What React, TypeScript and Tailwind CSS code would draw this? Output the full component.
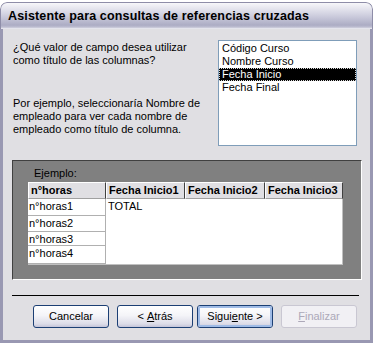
const font = { fontFamily: '"Liberation Sans", Arial, sans-serif' };

const fields = ["Código Curso", "Nombre Curso", "Fecha Inicio", "Fecha Final"];
const cols = [
  { label: "n°horas", w: "w-[78px]" },
  { label: "Fecha Inicio1", w: "w-[79px]" },
  { label: "Fecha Inicio2", w: "w-[80px]" },
  { label: "Fecha Inicio3", w: "w-[78px]" },
];
const rows = [
  { label: "n°horas1", h: "h-[17px]" },
  { label: "n°horas2", h: "h-[17px]" },
  { label: "n°horas3", h: "h-[14px]" },
  { label: "n°horas4", h: "h-[18px]" },
];

function WizButton({
  children,
  isDefault,
  disabled,
  className = "",
}: {
  children: React.ReactNode;
  isDefault?: boolean;
  disabled?: boolean;
  className?: string;
}) {
  if (disabled) {
    return (
      <div
        className={`w-[76px] h-[23px] rounded-[3px] border border-[#c9c7d2] bg-[#f1f0f4] text-[#aca8b8] text-[11px] flex items-center justify-center ${className}`}
      >
        {children}
      </div>
    );
  }
  return (
    <div
      className={`w-[76px] h-[23px] rounded-[3px] border border-[#1c3f74] bg-[linear-gradient(to_bottom,#ffffff_0%,#f4f4f8_45%,#dcdce8_85%,#c4c4d8_100%)] text-black text-[11px] flex items-center justify-center ${className}`}
    >
      <div
        className={`w-full h-full rounded-[2px] flex items-center justify-center ${
          isDefault ? "border-2 border-[#9fbbe6]" : ""
        }`}
      >
        {children}
      </div>
    </div>
  );
}

export default function App() {
  return (
    <div className="w-[373px] h-[343px] bg-white flex flex-col" style={font}>
      <div className="mt-[2px] flex flex-col rounded-t-[7px] overflow-hidden">
        {/* title bar */}
        <div className="h-[27px] border-t border-x border-[#8e8da8] rounded-t-[7px] bg-[linear-gradient(to_bottom,#f7f7fa_0%,#e2e2ec_25%,#c8c8da_55%,#acacc4_85%,#bfbfd2_93%,#f2f2f6_100%)] flex items-center pl-[7px]">
          <span className="text-[12.5px] font-bold text-black tracking-[0.15px] leading-none">
            Asistente para consultas de referencias cruzadas
          </span>
        </div>

        {/* body */}
        <div className="h-[314px] bg-[#e0dfe3] border-x-[3px] border-b-[3px] border-[#9998b2] flex flex-col text-black">
          <div className="h-[131px] flex">
            <div className="pl-[10px] pt-[12px] text-[11px] leading-[13px]">
              <p>¿Qué valor de campo desea utilizar</p>
              <p>como título de las columnas?</p>
              <p className="mt-[30px]">Por ejemplo, seleccionaría Nombre de</p>
              <p>empleado para ver cada nombre de</p>
              <p>empleado como título de columna.</p>
            </div>
            <div className="ml-auto mr-[13px] mt-[11px] w-[139px] h-[106px] bg-white border border-[#7f9db9] pt-[1px] text-[11px] leading-[13px]">
              {fields.map((f) =>
                f === "Fecha Inicio" ? (
                  <div
                    key={f}
                    className="h-[13px] pl-[3px] bg-black text-white outline-1 outline-dotted outline-[#d8d8d8] -outline-offset-1"
                  >
                    {f}
                  </div>
                ) : (
                  <div key={f} className="h-[13px] pl-[3px]">
                    {f}
                  </div>
                )
              )}
            </div>
          </div>

          {/* example panel */}
          <div className="ml-[9px] w-[350px] h-[120px] bg-[#808080] border-t border-l border-t-[#404040] border-l-[#404040] border-r border-b border-r-white border-b-white flex flex-col">
            <div className="pl-[21px] pt-[6px] text-[11px] leading-[13px] text-black">
              Ejemplo:
            </div>
            <div className="ml-[15px] mt-[2px] w-[315px] flex flex-col">
              <div className="flex h-[17px]">
                {cols.map((c) => (
                  <div
                    key={c.label}
                    className={`${c.w} h-full bg-[#e0dfe3] border-t border-l border-white border-r border-b border-r-[#404040] border-b-[#a0a0a0] text-[11px] font-bold leading-[14px] pl-[2px] whitespace-nowrap overflow-hidden`}
                  >
                    {c.label}
                  </div>
                ))}
              </div>
              <div className="flex h-[66px] bg-white border-r border-b border-[#c0c0c0]">
                <div className="w-[78px] flex flex-col border-r border-[#b0b0b0]">
                  {rows.map((r) => (
                    <div
                      key={r.label}
                      className={`${r.h} border-b border-[#b0b0b0] text-[11px] leading-[15px] pl-[1px]`}
                    >
                      {r.label}
                    </div>
                  ))}
                </div>
                <div className="pl-[2px] text-[11px] leading-[15px]">TOTAL</div>
              </div>
            </div>
          </div>

          {/* separator */}
          <div className="ml-[9px] mt-[15px] w-[347px] h-px bg-black" />

          {/* buttons */}
          <div className="ml-[30px] mt-[9px] flex">
            <WizButton>Cancelar</WizButton>
            <WizButton className="ml-[8px]">
              &lt;&nbsp;<u>A</u>trás
            </WizButton>
            <WizButton className="ml-[4px]" isDefault>
              Sigui<u>e</u>nte &gt;
            </WizButton>
            <WizButton className="ml-[8px]" disabled>
              <u>F</u>inalizar
            </WizButton>
          </div>
        </div>
      </div>
    </div>
  );
}
